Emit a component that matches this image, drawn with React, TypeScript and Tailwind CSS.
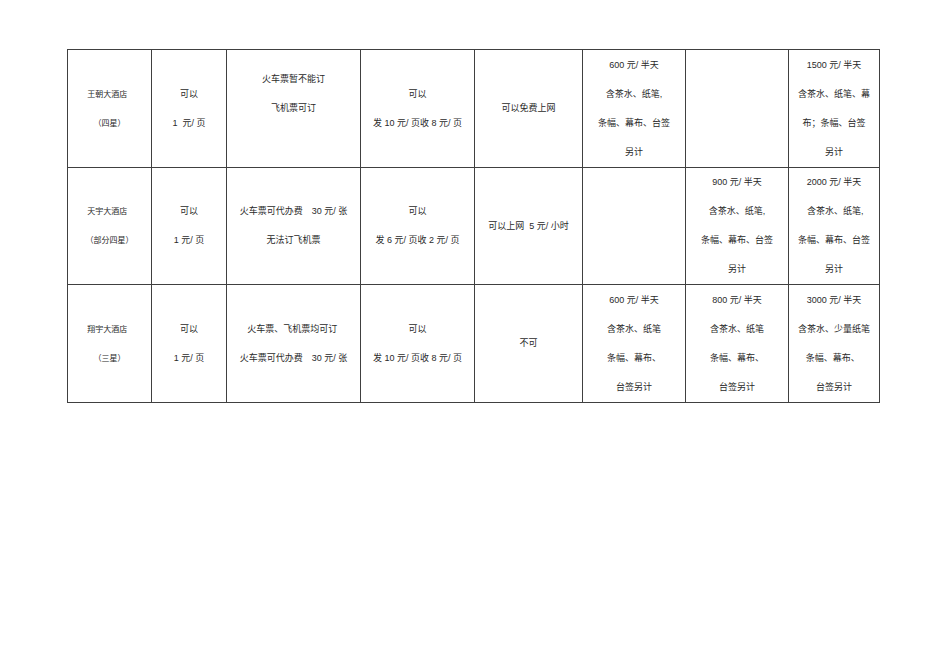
import React from 'react';

// column widths include each cell's right border
const COLS = 'grid-cols-[84px_75px_134px_114px_108px_103px_103px_91px]';

type Cell = string[];

const ROWS: { h: string; cells: Cell[] }[] = [
  {
    h: 'h-[118px]',
    cells: [
      ['王朝大酒店  ', '（四星）'],
      ['可以', '1  元/ 页'],
      ['火车票暂不能订', '飞机票可订', ''],
      ['可以', '发 10 元/ 页收 8 元/ 页'],
      ['可以免费上网'],
      ['600 元/ 半天', '含茶水、纸笔,', '条幅、幕布、台签', '另计'],
      [],
      ['1500 元/ 半天', '含茶水、纸笔、幕', '布；条幅、台签', '另计'],
    ],
  },
  {
    h: 'h-[117px]',
    cells: [
      ['天宇大酒店  ', '（部分四星）'],
      ['可以', '1 元/ 页'],
      ['火车票可代办费　30 元/ 张', '无法订飞机票'],
      ['可以', '发 6 元/ 页收 2 元/ 页'],
      ['可以上网  5 元/ 小时'],
      [],
      ['900 元/ 半天', '含茶水、纸笔,', '条幅、幕布、台签', '另计'],
      ['2000 元/ 半天', ' 含茶水、纸笔,', '条幅、幕布、台签', '另计'],
    ],
  },
  {
    h: 'h-[118px]',
    cells: [
      ['翔宇大酒店  ', '（三星）'],
      ['可以', '1 元/ 页'],
      ['火车票、飞机票均可订 ', '火车票可代办费　30 元/ 张'],
      ['可以', '发 10 元/ 页收 8 元/ 页'],
      ['不可'],
      ['600 元/ 半天', '含茶水、纸笔', '条幅、幕布、', '台签另计'],
      ['800 元/ 半天', '含茶水、纸笔', '条幅、幕布、', '台签另计'],
      ['3000 元/ 半天', '含茶水、少量纸笔', '条幅、幕布、 ', '台签另计'],
    ],
  },
];

export default function App() {
  return (
    <div
      className="w-[950px] h-[671px] bg-white text-[#2a2a2a] pt-[49px] pl-[67px]"
      style={{ fontFamily: '"Liberation Sans", "Noto Sans CJK SC", sans-serif' }}
    >
      <div className="w-[813px] border-l border-t border-[#404040]">
        {ROWS.map((row, r) => (
          <div key={r} className={`grid ${COLS}`}>
            {row.cells.map((lines, c) => (
              <div
                key={c}
                className={`${row.h} border-r border-b border-[#404040] flex flex-col items-center justify-center text-center whitespace-pre ${
                  c === 0 ? 'text-[8px]' : 'text-[9px]'
                } leading-[29px]`}
              >
                {lines.map((t, i) => (
                  <div key={i} className="h-[29px]">
                    {t}
                  </div>
                ))}
              </div>
            ))}
          </div>
        ))}
      </div>
    </div>
  );
}
